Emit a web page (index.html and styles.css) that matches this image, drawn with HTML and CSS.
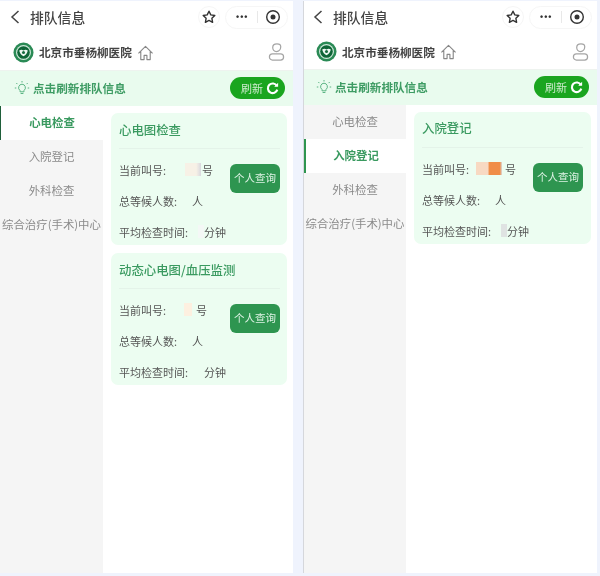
FILE: index.html
```html
<!DOCTYPE html>
<html lang="zh-CN">
<head>
<meta charset="utf-8">
<title>排队信息</title>
<link rel="stylesheet" href="styles.css">
</head>
<body>
<svg class="defs" width="0" height="0" aria-hidden="true">
  <symbol id="i-back" viewBox="0 0 14 16"><path d="M10.500 2 4 8l6.500 6" fill="none" stroke="#444" stroke-width="1.500"/></symbol>
  <symbol id="i-star" viewBox="0 0 16 16"><path d="M8 2.200l1.800 3.700 4 .6-2.900 2.800.7 4L8 11.400l-3.600 1.900.7-4L2.200 6.500l4-.6z" fill="none" stroke="#333" stroke-width="1.400" stroke-linejoin="round"/></symbol>
  <symbol id="i-target" viewBox="0 0 16 16"><circle cx="8" cy="8" r="6.300" fill="none" stroke="#333" stroke-width="1.400"/><circle cx="8" cy="8" r="2.500" fill="#333"/></symbol>
  <symbol id="i-logo" viewBox="0 0 22 22"><circle cx="11" cy="11" r="10.500" fill="#2a8a55"/><circle cx="11" cy="11" r="7.800" fill="#cfe8da"/><circle cx="11" cy="11" r="6.600" fill="#0e6537"/><path d="M6.500 9c1.600-1.300 3-1.300 4.500 0 1.500-1.300 2.900-1.300 4.500 0-.5 2.800-2.100 4.800-4.500 6-2.400-1.200-4-3.200-4.500-6z" fill="#eef7f2"/><circle cx="11" cy="11" r="1.600" fill="#156b3e"/></symbol>
  <symbol id="i-home" viewBox="0 0 18 18"><path d="M1.500 9.300 9 2l7.500 7.300M4 7.500V16h3.500v-4.500h3V16H14V7.500" fill="none" stroke="#888" stroke-width="1.200" stroke-linejoin="round"/></symbol>
  <symbol id="i-user" viewBox="0 0 18 20"><path d="M9.500 1.500c2.600 0 4 1 4 3 0 2.800-2 5-4.500 5S5 7.700 5 5.300c0-2.100 1.900-3.800 4.500-3.800z" fill="none" stroke="#a5a5a5" stroke-width="1.300"/><rect x="1.500" y="12" width="15" height="6.500" rx="3.200" fill="none" stroke="#a5a5a5" stroke-width="1.300"/></symbol>
  <symbol id="i-bulb" viewBox="0 0 16 16"><path d="M8 4.200a3.500 3.500 0 0 0-2 6.300v1.300h4v-1.300a3.500 3.500 0 0 0-2-6.300zM6.600 13.500h2.800M8 1v1.500M2.300 3l1.100 1.100M13.700 3l-1.100 1.100M.8 8h1.500M13.700 8h1.500" fill="none" stroke="#5cb584" stroke-width="1"/></symbol>
  <symbol id="i-refresh" viewBox="0 0 12 12"><path d="M10 3.600A4.400 4.400 0 1 0 10.400 7" fill="none" stroke="#fff" stroke-width="2"/><path d="M7.600 4.300h3.600V.8z" fill="#fff"/></symbol>
</svg>

<main class="shots">
  <section class="phone phone-a">
    <header class="nav">
      <svg class="ic-back"><use href="#i-back"/></svg>
      <h1 class="nav-title">排队信息</h1>
      <span class="star-btn"><svg class="ic-16"><use href="#i-star"/></svg></span>
      <span class="capsule"><span class="dots">•••</span><i class="capsule-line"></i><svg class="ic-16"><use href="#i-target"/></svg></span>
    </header>
    <div class="hospital">
      <svg class="ic-logo"><use href="#i-logo"/></svg>
      <span class="hospital-name">北京市垂杨柳医院</span>
      <svg class="ic-home"><use href="#i-home"/></svg>
      <svg class="ic-user"><use href="#i-user"/></svg>
    </div>
    <div class="banner">
      <svg class="ic-bulb"><use href="#i-bulb"/></svg>
      <span class="banner-text">点击刷新排队信息</span>
      <span class="refresh">刷新<svg class="ic-refresh"><use href="#i-refresh"/></svg></span>
    </div>
    <div class="body">
      <nav class="side">
        <a class="side-item active">心电检查</a>
        <a class="side-item">入院登记</a>
        <a class="side-item">外科检查</a>
        <a class="side-item">综合治疗(手术)中心</a>
      </nav>
      <div class="cards">
        <article class="card">
          <h2 class="card-title">心电图检查</h2>
          <div class="card-body">
            <div class="rows">
              <p class="row">当前叫号:<span class="val val-wide"><i class="blot blot-a"></i></span>号</p>
              <p class="row">总等候人数:<span class="val val-s"></span>人</p>
              <p class="row">平均检查时间:<span class="val val-t"><i class="blot blot-e"></i></span>分钟</p>
            </div>
            <button class="query">个人查询</button>
          </div>
        </article>
        <article class="card">
          <h2 class="card-title">动态心电图/血压监测</h2>
          <div class="card-body">
            <div class="rows">
              <p class="row">当前叫号:<span class="val val-mid"><i class="blot blot-b"></i></span>号</p>
              <p class="row">总等候人数:<span class="val val-s"></span>人</p>
              <p class="row">平均检查时间:<span class="val val-t"></span>分钟</p>
            </div>
            <button class="query">个人查询</button>
          </div>
        </article>
      </div>
    </div>
  </section>

  <section class="phone phone-b">
    <header class="nav">
      <svg class="ic-back"><use href="#i-back"/></svg>
      <h1 class="nav-title">排队信息</h1>
      <span class="star-btn"><svg class="ic-16"><use href="#i-star"/></svg></span>
      <span class="capsule"><span class="dots">•••</span><i class="capsule-line"></i><svg class="ic-16"><use href="#i-target"/></svg></span>
    </header>
    <div class="hospital">
      <svg class="ic-logo"><use href="#i-logo"/></svg>
      <span class="hospital-name">北京市垂杨柳医院</span>
      <svg class="ic-home"><use href="#i-home"/></svg>
      <svg class="ic-user"><use href="#i-user"/></svg>
    </div>
    <div class="banner">
      <svg class="ic-bulb"><use href="#i-bulb"/></svg>
      <span class="banner-text">点击刷新排队信息</span>
      <span class="refresh">刷新<svg class="ic-refresh"><use href="#i-refresh"/></svg></span>
    </div>
    <div class="body">
      <nav class="side">
        <a class="side-item">心电检查</a>
        <a class="side-item active">入院登记</a>
        <a class="side-item">外科检查</a>
        <a class="side-item">综合治疗(手术)中心</a>
      </nav>
      <div class="cards">
        <article class="card">
          <h2 class="card-title">入院登记</h2>
          <div class="card-body">
            <div class="rows">
              <p class="row">当前叫号:<span class="val val-wide"><i class="blot blot-c"></i></span>号</p>
              <p class="row">总等候人数:<span class="val val-s"></span>人</p>
              <p class="row">平均检查时间:<span class="val val-t"><i class="blot blot-d"></i></span>分钟</p>
            </div>
            <button class="query">个人查询</button>
          </div>
        </article>
      </div>
    </div>
  </section>
</main>
</body>
</html>
```
FILE: styles.css
```css
* { box-sizing: border-box; }
html, body { margin: 0; padding: 0; }
body {
  width: 600px;
  height: 576px;
  overflow: hidden;
  background: #eff3fd;
  font-family: "Noto Sans CJK SC", "Noto Sans", sans-serif;
}
.defs { position: absolute; }
.shots {
  display: flex;
  gap: 10px;
  height: 573px;
  padding-top: 1px;
}
.phone {
  width: 293px;
  height: 572px;
  background: #fff;
  display: flex;
  flex-direction: column;
  filter: blur(0.5px);
}
.phone-b { width: 294px; border-left: 1px solid #d5d7dc; }

.nav {
  height: 34px;
  flex: none;
  display: flex;
  align-items: center;
  padding: 0 5px 2px 8px;
}
.phone-b .nav { padding-left: 7px; }
.ic-back { width: 14px; height: 16px; margin-right: 8px; }
.nav-title {
  margin: 0;
  flex: 1;
  font-size: 13.8px;
  font-weight: 500;
  color: #444;
  line-height: 20px;
}
.star-btn {
  width: 22px;
  height: 22px;
  border-radius: 50%;
  display: flex;
  align-items: center;
  justify-content: center;
  border: 1px solid #f6f6f6;
  margin-right: 5px;
}
.ic-16 { width: 16px; height: 16px; display: block; }
.capsule {
  width: 63px;
  height: 23px;
  border: 1px solid #f6f6f6;
  border-radius: 12px;
  display: flex;
  align-items: center;
  padding: 0 6px 0 10px;
}
.dots { font: 700 9px/1 "Liberation Sans", sans-serif; color: #333; letter-spacing: 1px; width: 20px; }
.capsule-line { width: 1px; height: 12px; background: #e8e8e8; margin-right: 7px; margin-left: 1px; }

.hospital {
  height: 36px;
  flex: none;
  display: flex;
  align-items: center;
  padding: 0 8px 1px 13px;
  border-bottom: 1px solid #eef3ef;
}
.phone-b .hospital { height: 35px; padding-left: 12px; }
.ic-logo { width: 21px; height: 21px; margin-right: 5px; }
.hospital-name { font-size: 11.6px; font-weight: 700; color: #444; line-height: 16px; }
.ic-home { width: 17px; height: 18px; margin: 1px auto 0 5px; }
.ic-user { width: 17px; height: 20px; }

.banner {
  height: 35px;
  flex: none;
  display: flex;
  align-items: center;
  background: #e9fbee;
  padding: 0 8px 2px 14px;
}
.phone-b .banner { padding-left: 12px; }
.ic-bulb { width: 16px; height: 16px; margin-right: 3px; }
.banner-text { flex: 1; font-size: 11.6px; font-weight: 700; color: #3e9c64; line-height: 16px; }
.refresh {
  width: 55px;
  height: 22px;
  border-radius: 11px;
  background: #1aa51f;
  color: #cfeccf;
  font-size: 11px;
  display: flex;
  align-items: center;
  justify-content: flex-end;
  gap: 3px;
  padding-right: 6px;
}
.ic-refresh { width: 13px; height: 13px; margin-top: 2px; }

.body { flex: 1; display: flex; min-height: 0; }
.side { width: 103px; flex: none; background: #f5f5f5; }
.phone-b .side { width: 102px; }
.side-item {
  height: 34px;
  padding-bottom: 2px;
  display: flex;
  align-items: center;
  justify-content: center;
  font-size: 11.4px;
  color: #8a8a8a;
  white-space: nowrap;
}
.phone-b .side-item { padding-bottom: 3px; }
.side-item:last-child { font-size: 11.4px; }
.side-item.active {
  background: #fff;
  color: #3a9a60;
  font-weight: 700;
  border-left: 1px solid #1f5f3a;
}
.phone-b .side-item.active { border-left: 2px solid #2e9550; }
.cards {
  flex: 1;
  padding: 7px 6px 0 8px;
  display: flex;
  flex-direction: column;
  gap: 8px;
}
.card {
  height: 132px;
  background: #ecfdf1;
  border-radius: 7px;
  padding: 0 7px 0 8px;
}
.phone-b .card { padding-right: 8px; }
.card-title {
  margin: 0;
  height: 36px;
  padding-bottom: 1px;
  line-height: 34px;
  font-size: 12.4px;
  font-weight: 500;
  color: #3a9a60;
  border-bottom: 1px solid #e4f3e9;
  white-space: nowrap;
}
.phone-b .card-title { line-height: 32px; }
.card-body { display: flex; align-items: flex-start; justify-content: space-between; }
.rows { padding-top: 5px; }
.row {
  margin: 0;
  height: 31px;
  display: flex;
  align-items: center;
  font-size: 11px;
  color: #555;
  white-space: nowrap;
}
.val { display: flex; justify-content: flex-end; height: 14px; }
.val-wide { width: 36px; }
.val-mid { width: 30px; }
.val-s { width: 15px; }
.val-t { width: 16px; }
.blot { display: block; height: 13px; }
.blot-a { width: 16px; margin-right: 1px; background: linear-gradient(90deg, #f7f1e6 70%, #d8d8de 100%); }
.blot-b { width: 8px; margin-right: 4px; background: #fdf0e0; }
.blot-c { width: 26px; margin-right: 3px; background: linear-gradient(90deg, #f8d9c2 45%, #f08d48 52%, #f08d48 92%, #d9dde0); }
.blot-d { width: 6px; background: #dfe3e2; }
.blot-e { width: 6px; background: #f4f8f6; }
.query {
  width: 50px;
  height: 29px;
  margin-top: 15px;
  padding: 0;
  border: 0;
  border-radius: 6px;
  background: #2e9550;
  color: #dff3e5;
  font: 400 10.5px/1 "Noto Sans CJK SC", sans-serif;
}
```
